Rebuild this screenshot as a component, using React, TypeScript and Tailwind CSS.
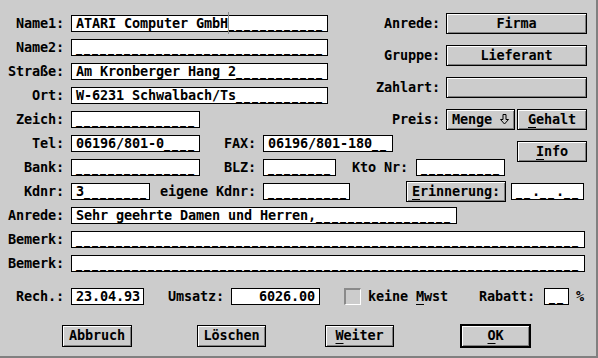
import React from "react";

type P = { className?: string; children?: React.ReactNode };

function Label({ className = "", children }: P) {
  return <div className={`shrink-0 text-right whitespace-pre ${className}`}>{children}</div>;
}

function T({ s }: { s: string }) {
  const parts = s.split(/(_+)/).filter((p) => p.length > 0);
  return (
    <>
      {parts.map((p, i) =>
        p[0] === "_" ? (
          <span key={i} className="text-[10px] tracking-[1.98px]">
            {p}
          </span>
        ) : (
          <span key={i}>{p}</span>
        )
      )}
    </>
  );
}

function Field({ className = "", s, right }: { className?: string; s: string; right?: boolean }) {
  return (
    <div
      className={`relative shrink-0 h-[17px] bg-white border border-black flex items-center whitespace-pre ${
        right ? "justify-end pr-[4px]" : "pl-[4px]"
      } ${className}`}
    >
      <span>
        <T s={s} />
      </span>
    </div>
  );
}

function Btn({ className = "", children }: P) {
  return (
    <div
      className={`shrink-0 flex items-center justify-center whitespace-pre bg-[#cccccc] border border-black shadow-[inset_1px_1px_0_#ffffff,inset_-1px_-1px_0_#808080] ${className}`}
    >
      {children}
    </div>
  );
}

function U({ children }: P) {
  return <span className="underline decoration-1 underline-offset-[3px]">{children}</span>;
}

function Row({ className = "", children }: P) {
  return <div className={`h-[24px] flex items-center ${className}`}>{children}</div>;
}

function DownArrow() {
  return (
    <svg width="9" height="11" viewBox="0 0 9 11" className="inline-block ml-[8px]">
      <path d="M3 0.5 H6 V5.5 H8.5 L4.5 10 L0.5 5.5 H3 Z" fill="none" stroke="#000" strokeWidth="1" />
    </svg>
  );
}

const u = (n: number) => "_".repeat(n);

export default function App() {
  return (
    <div className="w-[598px] h-[358px] bg-[#cccccc] shadow-[inset_-2px_-2px_0_#808080] text-black font-['DejaVu_Sans_Mono',monospace] font-bold text-[13.5px] tracking-[-0.13px] leading-none pt-[11.5px] overflow-hidden">
      {/* Section A */}
      <div className="flex">
        <div className="w-[340px] shrink-0 flex flex-col">
          <Row>
            <Label className="w-[64px]">Name1:</Label>
            <div className="relative ml-[7px]">
              <Field className="w-[257px]" s={"ATARI Computer GmbH" + u(12)} />
              <span className="absolute left-[157px] top-[-3px] w-px h-[22px] bg-[#8c8c8c]" />
            </div>
          </Row>
          <Row>
            <Label className="w-[64px]">Name2:</Label>
            <Field className="ml-[7px] w-[257px]" s={u(31)} />
          </Row>
          <Row>
            <Label className="w-[64px]">Straße:</Label>
            <Field className="ml-[7px] w-[257px]" s={"Am Kronberger Hang 2" + u(11)} />
          </Row>
          <Row>
            <Label className="w-[64px]">Ort:</Label>
            <Field className="ml-[7px] w-[257px]" s={"W-6231 Schwalbach/Ts" + u(11)} />
          </Row>
        </div>
        <div className="flex-1 flex flex-col -mt-[4px] pr-[11px]">
          <div className="h-[32px] flex items-center justify-end">
            <Label>Anrede:</Label>
            <Btn className="ml-[6px] w-[141px] h-[21px]">Firma</Btn>
          </div>
          <div className="h-[32px] flex items-center justify-end">
            <Label>Gruppe:</Label>
            <Btn className="ml-[6px] w-[141px] h-[21px]">Lieferant</Btn>
          </div>
          <div className="h-[32px] flex items-center justify-end">
            <Label>Zahlart:</Label>
            <Btn className="ml-[6px] w-[141px] h-[21px]"></Btn>
          </div>
        </div>
      </div>

      {/* Section B */}
      <Row className="pr-[11px]">
        <Label className="w-[64px]">Zeich:</Label>
        <Field className="ml-[7px] w-[129px]" s={u(15)} />
        <div className="flex-1" />
        <Label>Preis:</Label>
        <Btn className="ml-[6px] w-[69px] h-[21px]">
          Menge
          <DownArrow />
        </Btn>
        <Btn className="ml-[2px] w-[70px] h-[21px]">
          <U>G</U>ehalt
        </Btn>
      </Row>

      {/* Section C */}
      <div className="flex pr-[11px]">
        <div className="flex flex-col">
          <Row>
            <Label className="w-[64px]">Tel:</Label>
            <Field className="ml-[7px] w-[129px]" s={"06196/801-0" + u(4)} />
            <Label className="w-[56px]">FAX:</Label>
            <Field className="ml-[7px] w-[130px]" s="06196/801-180__" />
          </Row>
          <Row>
            <Label className="w-[64px]">Bank:</Label>
            <Field className="ml-[7px] w-[129px]" s={u(15)} />
            <Label className="w-[56px]">BLZ:</Label>
            <Field className="ml-[7px] w-[73px]" s={u(8)} />
            <Label className="w-[72px]">Kto Nr:</Label>
            <Field className="ml-[8px] w-[89px]" s={u(10)} />
          </Row>
        </div>
        <Btn className="ml-auto mt-[9.5px] w-[70px] h-[21px]">
          <U>I</U>nfo
        </Btn>
      </div>

      {/* Section D */}
      <Row>
        <Label className="w-[64px]">Kdnr:</Label>
        <Field className="ml-[7px] w-[79px]" s={"3" + u(8)} />
        <Label className="w-[106px]">eigene Kdnr:</Label>
        <Field className="ml-[7px] w-[87px]" s={u(10)} />
        <Btn className="ml-[56px] w-[100px] h-[21px]">
          <U>E</U>rinnerung:
        </Btn>
        <Field className="ml-[5px] w-[73px]" s="__.__.__" />
      </Row>

      {/* Section E */}
      <Row>
        <Label className="w-[64px]">Anrede:</Label>
        <Field className="ml-[7px] w-[386px]" s={"Sehr geehrte Damen und Herren," + u(17)} />
      </Row>
      <Row>
        <Label className="w-[64px]">Bemerk:</Label>
        <Field className="ml-[7px] w-[514px]" s={u(63)} />
      </Row>
      <Row>
        <Label className="w-[64px]">Bemerk:</Label>
        <Field className="ml-[7px] w-[514px]" s={u(63)} />
      </Row>

      {/* Section F */}
      <Row className="mt-[9px]">
        <Label className="w-[64px]">Rech.:</Label>
        <Field className="ml-[7px] w-[73px]" s="23.04.93" />
        <Label className="w-[80px]">Umsatz:</Label>
        <Field className="ml-[7px] w-[89px]" right s="6026.00" />
        <div className="ml-[24px] w-[17px] h-[17px] shrink-0 border-l-2 border-t-2 border-r border-b border-l-[#8a8a8a] border-t-[#8a8a8a] border-r-white border-b-white" />
        <div className="ml-[7px] whitespace-pre">
          keine <U>M</U>wst
        </div>
        <Label className="w-[87px]">Rabatt:</Label>
        <Field className="ml-[9px] w-[25px]" s="__" />
        <div className="ml-[7px]">%</div>
      </Row>

      {/* Section G */}
      <Row className="mt-[15.5px]">
        <Btn className="ml-[62px] w-[70px] h-[22px]">Abbruch</Btn>
        <Btn className="ml-[65px] w-[69px] h-[22px]">Löschen</Btn>
        <Btn className="ml-[59px] w-[69px] h-[22px]">
          <U>W</U>eiter
        </Btn>
        <Btn className="ml-[66px] w-[71px] h-[24px] border-2">
          <U>O</U>K
        </Btn>
      </Row>
    </div>
  );
}
